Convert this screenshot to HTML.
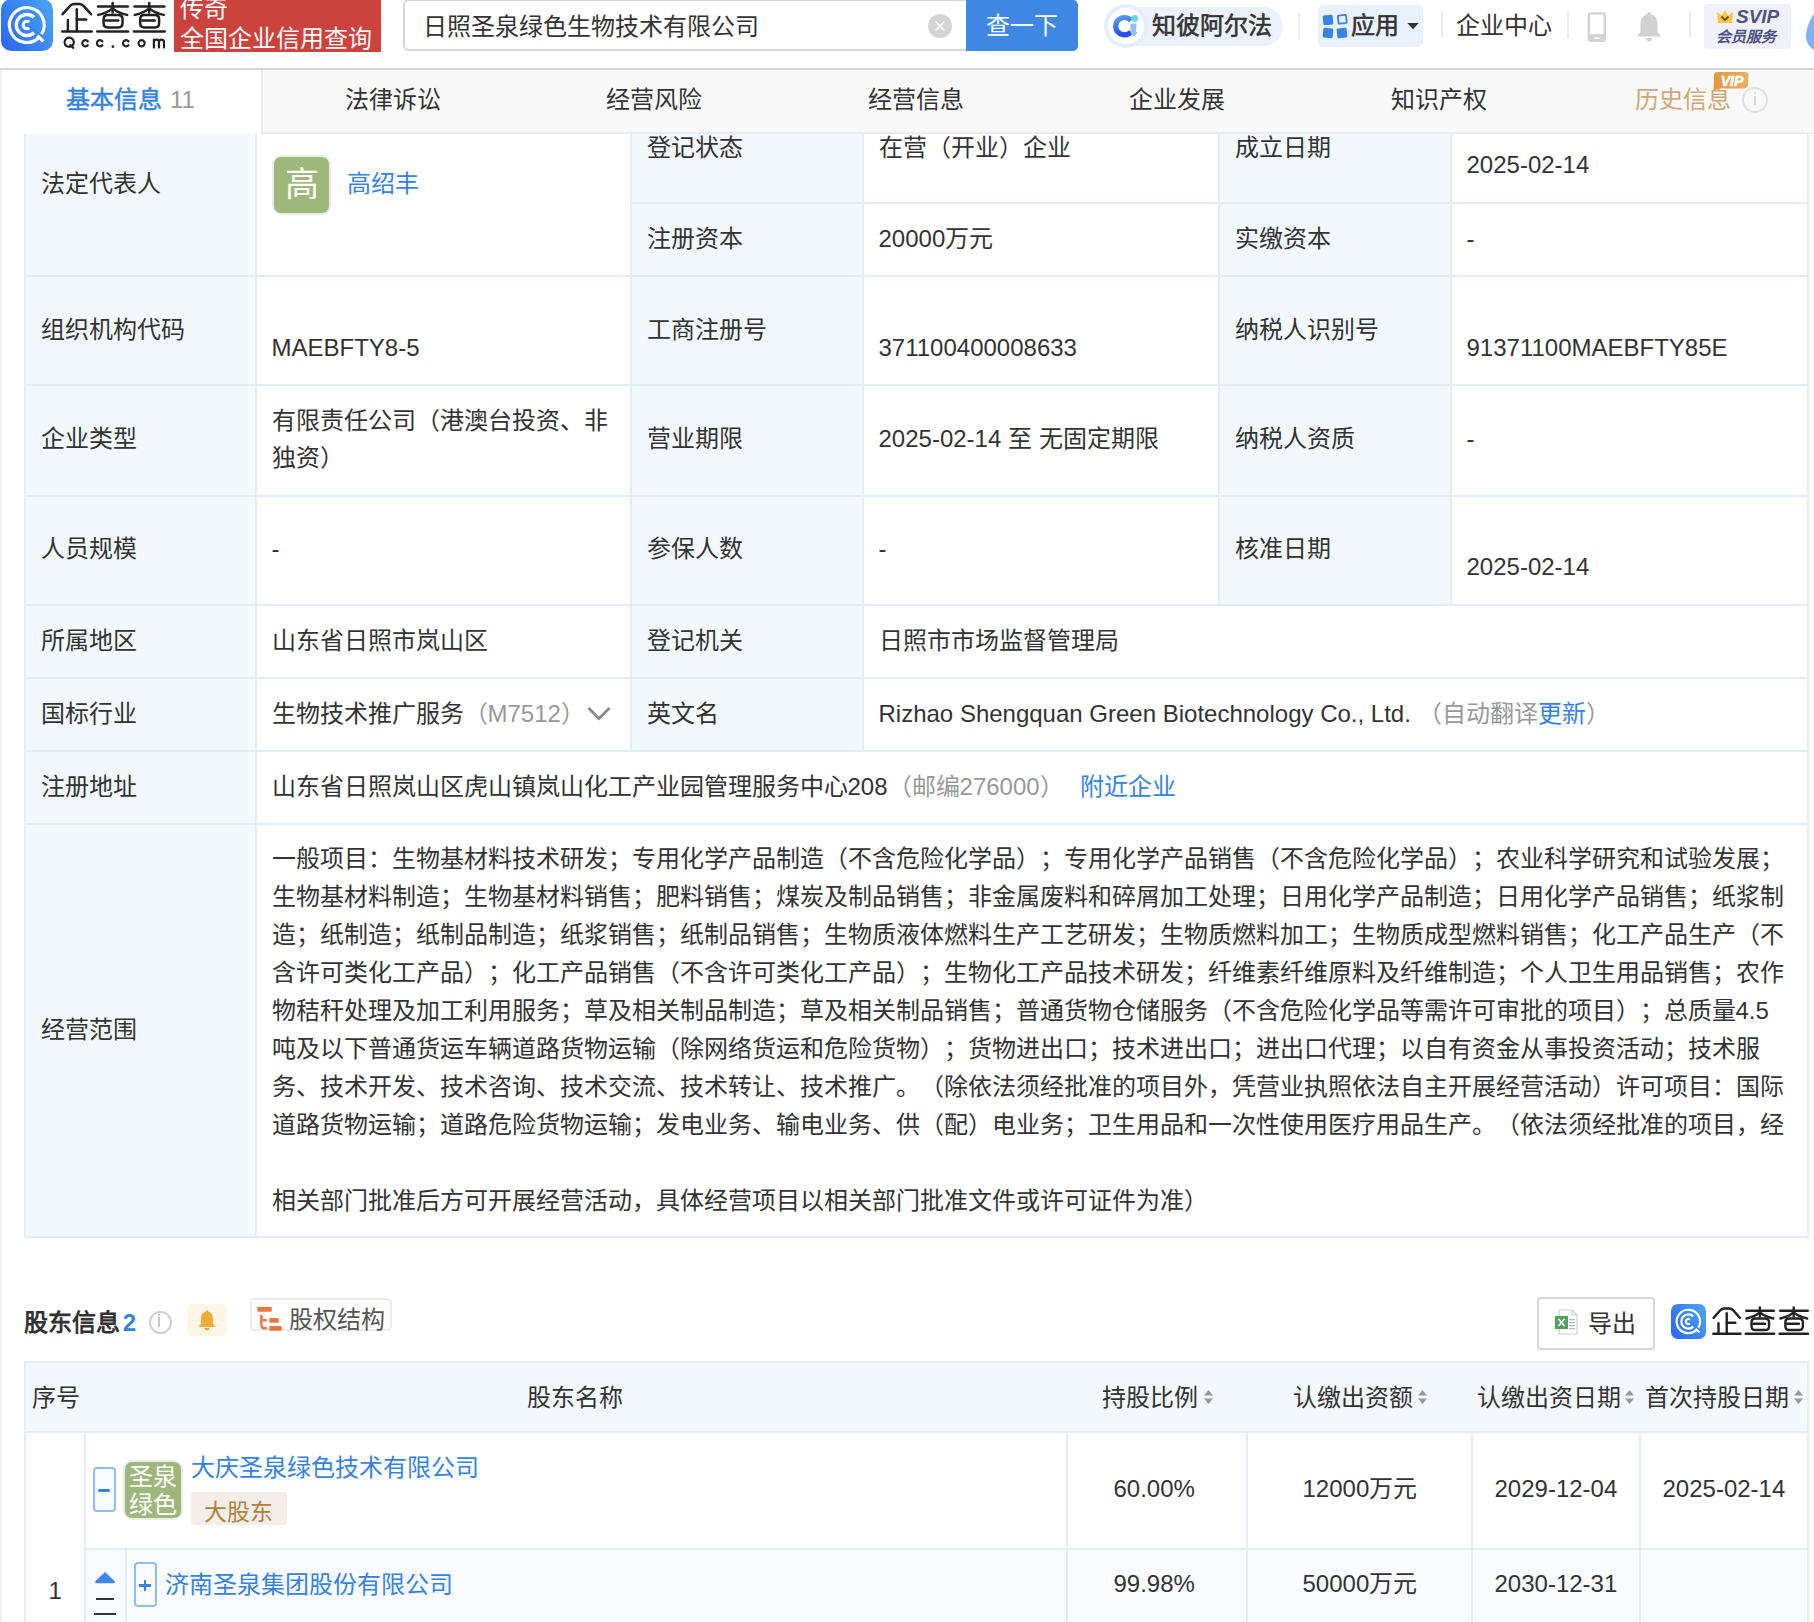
<!DOCTYPE html>
<html lang="zh-CN"><head><meta charset="utf-8"><style>
html,body{margin:0;padding:0;}
body{width:1814px;height:1622px;position:relative;overflow:hidden;background:#fff;font-family:"Liberation Sans",sans-serif;text-spacing-trim:space-all;}
</style></head><body>
<div style="position:absolute;left:26px;top:92px;width:229px;height:1144px;background:#f2f8fc;"></div>
<div style="position:absolute;left:1220px;top:92px;width:230px;height:512px;background:#f2f8fc;"></div>
<div style="position:absolute;left:632px;top:92px;width:230px;height:658px;background:#f2f8fc;"></div>
<div style="position:absolute;left:632px;top:202px;width:1177px;height:2px;background:#e4ecf5;"></div>
<div style="position:absolute;left:24px;top:275px;width:1785px;height:2px;background:#e4ecf5;"></div>
<div style="position:absolute;left:24px;top:384px;width:1785px;height:2px;background:#e4ecf5;"></div>
<div style="position:absolute;left:24px;top:495px;width:1785px;height:2px;background:#e4ecf5;"></div>
<div style="position:absolute;left:24px;top:604px;width:1785px;height:2px;background:#e4ecf5;"></div>
<div style="position:absolute;left:24px;top:677px;width:1785px;height:2px;background:#e4ecf5;"></div>
<div style="position:absolute;left:24px;top:750px;width:1785px;height:2px;background:#e4ecf5;"></div>
<div style="position:absolute;left:24px;top:823px;width:1785px;height:2px;background:#e4ecf5;"></div>
<div style="position:absolute;left:24px;top:1236px;width:1785px;height:2px;background:#e4ecf5;"></div>
<div style="position:absolute;left:24px;top:92px;width:2px;height:1146px;background:#e4ecf5;"></div>
<div style="position:absolute;left:1807px;top:92px;width:2px;height:1146px;background:#e4ecf5;"></div>
<div style="position:absolute;left:255px;top:92px;width:2px;height:1146px;background:#e4ecf5;"></div>
<div style="position:absolute;left:630px;top:92px;width:2px;height:658px;background:#e4ecf5;"></div>
<div style="position:absolute;left:862px;top:92px;width:2px;height:658px;background:#e4ecf5;"></div>
<div style="position:absolute;left:1218px;top:92px;width:2px;height:512px;background:#e4ecf5;"></div>
<div style="position:absolute;left:1450px;top:92px;width:2px;height:512px;background:#e4ecf5;"></div>
<div style="position:absolute;left:41.2px;top:164.0px;line-height:40px;font-size:24px;color:#333;white-space:nowrap;">法定代表人</div>
<div style="position:absolute;left:272px;top:155px;width:55px;height:56px;border:2px solid #ececec;border-radius:9px;background:#9db87a;"></div>
<div style="position:absolute;left:274px;top:157px;width:55px;height:55px;line-height:55px;text-align:center;color:#fff;font-size:34px;">高</div>
<div style="position:absolute;left:347.0px;top:164.0px;line-height:40px;font-size:24px;color:#3483e2;white-space:nowrap;">高绍丰</div>
<div style="position:absolute;left:646.5px;top:128.0px;line-height:40px;font-size:24px;color:#333;white-space:nowrap;">登记状态</div>
<div style="position:absolute;left:878.5px;top:128.0px;line-height:40px;font-size:24px;color:#333;white-space:nowrap;">在营（开业）企业</div>
<div style="position:absolute;left:1234.5px;top:128.0px;line-height:40px;font-size:24px;color:#333;white-space:nowrap;">成立日期</div>
<div style="position:absolute;left:1466.5px;top:145.3px;line-height:40px;font-size:24px;color:#333;white-space:nowrap;">2025-02-14</div>
<div style="position:absolute;left:646.5px;top:219.0px;line-height:40px;font-size:24px;color:#333;white-space:nowrap;">注册资本</div>
<div style="position:absolute;left:878.5px;top:219.0px;line-height:40px;font-size:24px;color:#333;white-space:nowrap;">20000万元</div>
<div style="position:absolute;left:1234.5px;top:219.0px;line-height:40px;font-size:24px;color:#333;white-space:nowrap;">实缴资本</div>
<div style="position:absolute;left:1466.5px;top:219.0px;line-height:40px;font-size:24px;color:#333;white-space:nowrap;">-</div>
<div style="position:absolute;left:41.2px;top:310.0px;line-height:40px;font-size:24px;color:#333;white-space:nowrap;">组织机构代码</div>
<div style="position:absolute;left:271.5px;top:328.0px;line-height:40px;font-size:24px;color:#333;white-space:nowrap;">MAEBFTY8-5</div>
<div style="position:absolute;left:646.5px;top:310.0px;line-height:40px;font-size:24px;color:#333;white-space:nowrap;">工商注册号</div>
<div style="position:absolute;left:878.5px;top:328.0px;line-height:40px;font-size:24px;color:#333;white-space:nowrap;">371100400008633</div>
<div style="position:absolute;left:1234.5px;top:310.0px;line-height:40px;font-size:24px;color:#333;white-space:nowrap;">纳税人识别号</div>
<div style="position:absolute;left:1466.5px;top:328.0px;line-height:40px;font-size:24px;color:#333;white-space:nowrap;">91371100MAEBFTY85E</div>
<div style="position:absolute;left:41.2px;top:419.0px;line-height:40px;font-size:24px;color:#333;white-space:nowrap;">企业类型</div>
<div style="position:absolute;left:271.5px;top:401.0px;line-height:40px;font-size:24px;color:#333;white-space:nowrap;">有限责任公司（港澳台投资、非</div>
<div style="position:absolute;left:271.5px;top:438.0px;line-height:40px;font-size:24px;color:#333;white-space:nowrap;">独资）</div>
<div style="position:absolute;left:646.5px;top:419.0px;line-height:40px;font-size:24px;color:#333;white-space:nowrap;">营业期限</div>
<div style="position:absolute;left:878.5px;top:419.0px;line-height:40px;font-size:24px;color:#333;white-space:nowrap;">2025-02-14 至 无固定期限</div>
<div style="position:absolute;left:1234.5px;top:419.0px;line-height:40px;font-size:24px;color:#333;white-space:nowrap;">纳税人资质</div>
<div style="position:absolute;left:1466.5px;top:419.0px;line-height:40px;font-size:24px;color:#333;white-space:nowrap;">-</div>
<div style="position:absolute;left:41.2px;top:529.0px;line-height:40px;font-size:24px;color:#333;white-space:nowrap;">人员规模</div>
<div style="position:absolute;left:271.5px;top:529.0px;line-height:40px;font-size:24px;color:#333;white-space:nowrap;">-</div>
<div style="position:absolute;left:646.5px;top:529.0px;line-height:40px;font-size:24px;color:#333;white-space:nowrap;">参保人数</div>
<div style="position:absolute;left:878.5px;top:529.0px;line-height:40px;font-size:24px;color:#333;white-space:nowrap;">-</div>
<div style="position:absolute;left:1234.5px;top:529.0px;line-height:40px;font-size:24px;color:#333;white-space:nowrap;">核准日期</div>
<div style="position:absolute;left:1466.5px;top:547.0px;line-height:40px;font-size:24px;color:#333;white-space:nowrap;">2025-02-14</div>
<div style="position:absolute;left:41.2px;top:621.0px;line-height:40px;font-size:24px;color:#333;white-space:nowrap;">所属地区</div>
<div style="position:absolute;left:271.5px;top:621.0px;line-height:40px;font-size:24px;color:#333;white-space:nowrap;">山东省日照市岚山区</div>
<div style="position:absolute;left:646.5px;top:621.0px;line-height:40px;font-size:24px;color:#333;white-space:nowrap;">登记机关</div>
<div style="position:absolute;left:878.5px;top:621.0px;line-height:40px;font-size:24px;color:#333;white-space:nowrap;">日照市市场监督管理局</div>
<div style="position:absolute;left:41.2px;top:694.0px;line-height:40px;font-size:24px;color:#333;white-space:nowrap;">国标行业</div>
<div style="position:absolute;left:271.5px;top:694.0px;line-height:40px;font-size:24px;color:#333;white-space:nowrap;">生物技术推广服务<span style="color:#999">（M7512）</span></div>
<div style="position:absolute;left:646.5px;top:694.0px;line-height:40px;font-size:24px;color:#333;white-space:nowrap;">英文名</div>
<div style="position:absolute;left:878.5px;top:694.0px;line-height:40px;font-size:24px;color:#333;white-space:nowrap;">Rizhao Shengquan Green Biotechnology Co., Ltd. <span style="color:#999">（自动翻译</span><span style="color:#3483e2">更新</span><span style="color:#999">）</span></div>
<svg style="position:absolute;left:586px;top:704px" width="26" height="18" viewBox="0 0 26 18"><path d="M2.5 4 L13 14.5 L23.5 4" fill="none" stroke="#8a8a8a" stroke-width="2.8"/></svg>
<div style="position:absolute;left:41.2px;top:767.0px;line-height:40px;font-size:24px;color:#333;white-space:nowrap;">注册地址</div>
<div style="position:absolute;left:271.5px;top:767.0px;line-height:40px;font-size:24px;color:#333;white-space:nowrap;">山东省日照岚山区虎山镇岚山化工产业园管理服务中心208<span style="color:#999">（邮编276000）</span></div>
<div style="position:absolute;left:1079.5px;top:767.0px;line-height:40px;font-size:24px;color:#3483e2;white-space:nowrap;">附近企业</div>
<div style="position:absolute;left:41.2px;top:1010.0px;line-height:40px;font-size:24px;color:#333;white-space:nowrap;">经营范围</div>
<div style="position:absolute;left:271.5px;top:839.0px;line-height:40px;font-size:24px;color:#333;white-space:nowrap;">一般项目：生物基材料技术研发；专用化学产品制造（不含危险化学品）；专用化学产品销售（不含危险化学品）；农业科学研究和试验发展；</div>
<div style="position:absolute;left:271.5px;top:877.0px;line-height:40px;font-size:24px;color:#333;white-space:nowrap;">生物基材料制造；生物基材料销售；肥料销售；煤炭及制品销售；非金属废料和碎屑加工处理；日用化学产品制造；日用化学产品销售；纸浆制</div>
<div style="position:absolute;left:271.5px;top:915.0px;line-height:40px;font-size:24px;color:#333;white-space:nowrap;">造；纸制造；纸制品制造；纸浆销售；纸制品销售；生物质液体燃料生产工艺研发；生物质燃料加工；生物质成型燃料销售；化工产品生产（不</div>
<div style="position:absolute;left:271.5px;top:953.0px;line-height:40px;font-size:24px;color:#333;white-space:nowrap;">含许可类化工产品）；化工产品销售（不含许可类化工产品）；生物化工产品技术研发；纤维素纤维原料及纤维制造；个人卫生用品销售；农作</div>
<div style="position:absolute;left:271.5px;top:991.0px;line-height:40px;font-size:24px;color:#333;white-space:nowrap;">物秸秆处理及加工利用服务；草及相关制品制造；草及相关制品销售；普通货物仓储服务（不含危险化学品等需许可审批的项目）；总质量4.5</div>
<div style="position:absolute;left:271.5px;top:1029.0px;line-height:40px;font-size:24px;color:#333;white-space:nowrap;">吨及以下普通货运车辆道路货物运输（除网络货运和危险货物）；货物进出口；技术进出口；进出口代理；以自有资金从事投资活动；技术服</div>
<div style="position:absolute;left:271.5px;top:1067.0px;line-height:40px;font-size:24px;color:#333;white-space:nowrap;">务、技术开发、技术咨询、技术交流、技术转让、技术推广。（除依法须经批准的项目外，凭营业执照依法自主开展经营活动）许可项目：国际</div>
<div style="position:absolute;left:271.5px;top:1105.0px;line-height:40px;font-size:24px;color:#333;white-space:nowrap;">道路货物运输；道路危险货物运输；发电业务、输电业务、供（配）电业务；卫生用品和一次性使用医疗用品生产。（依法须经批准的项目，经</div>
<div style="position:absolute;left:271.5px;top:1181.0px;line-height:40px;font-size:24px;color:#333;white-space:nowrap;">相关部门批准后方可开展经营活动，具体经营项目以相关部门批准文件或许可证件为准）</div>
<div style="position:absolute;left:23.8px;top:1302.5px;line-height:40px;font-size:24px;color:#333;white-space:nowrap;font-weight:bold">股东信息<span style="color:#3483e2;margin-left:3px">2</span></div>
<div style="position:absolute;left:149px;top:1311px;width:19px;height:19px;border:2px solid #d0d0d0;border-radius:50%;"></div>
<div style="position:absolute;left:158px;top:1317px;width:2px;height:10px;background:#c8c8c8"></div><div style="position:absolute;left:158px;top:1314px;width:2px;height:2px;background:#c8c8c8"></div>
<div style="position:absolute;left:187px;top:1304px;width:40px;height:32px;background:#fff5e6;border-radius:4px"></div>
<svg style="position:absolute;left:197px;top:1309px" width="20" height="22" viewBox="0 0 20 22"><path d="M10 1 C10 1 11 1 11 2.5 C14.5 3.5 16 6.5 16 10 L16 15 L18.5 18 L1.5 18 L4 15 L4 10 C4 6.5 5.5 3.5 9 2.5 C9 1 10 1 10 1 Z" fill="#f0aa38"/><path d="M7.5 19 L12.5 19 C12.5 20.5 11.5 21.5 10 21.5 C8.5 21.5 7.5 20.5 7.5 19Z" fill="#f0aa38"/></svg>
<div style="position:absolute;left:250px;top:1298px;width:138px;height:29px;border:2px solid #ebebeb;border-radius:5px;"></div>
<svg style="position:absolute;left:256px;top:1305px" width="28" height="28" viewBox="0 0 28 28"><g fill="#ed7740"><rect x="1.4" y="2" width="14.4" height="4.8" rx="1"/><rect x="13.3" y="13" width="9.4" height="4.7" rx="0.8"/><rect x="13.3" y="21" width="12.4" height="4.7" rx="0.8"/></g><g fill="none" stroke="#ed7740" stroke-width="2.5"><path d="M5.4 10 L5.4 20 Q5.4 23.3 8.7 23.3 L10.8 23.3"/><path d="M5.4 15.2 L10.8 15.2"/></g></svg>
<div style="position:absolute;left:288.5px;top:1300.0px;line-height:40px;font-size:24px;color:#555;white-space:nowrap;">股权结构</div>
<div style="position:absolute;left:1537px;top:1297px;width:114px;height:49px;border:2px solid #d6d6d6;border-radius:4px;background:#fff"></div>
<svg style="position:absolute;left:1555px;top:1309px" width="24" height="26" viewBox="0 0 24 26"><path d="M4 1 L17 1 L22 6 L22 25 L4 25 Z" fill="#fff" stroke="#cfcfcf" stroke-width="1.2"/><path d="M17 1 L17 6 L22 6" fill="none" stroke="#cfcfcf" stroke-width="1.2"/><rect x="14" y="10" width="6" height="1.3" fill="#bbb"/><rect x="14" y="13" width="6" height="1.3" fill="#bbb"/><rect x="14" y="16" width="6" height="1.3" fill="#bbb"/><rect x="14" y="19" width="6" height="1.3" fill="#bbb"/><rect x="0" y="7" width="13" height="13" fill="#4ea35c"/><path d="M3.5 10 L9.5 17 M9.5 10 L3.5 17" stroke="#fff" stroke-width="1.8"/></svg>
<div style="position:absolute;left:1587.5px;top:1304.0px;line-height:40px;font-size:24px;color:#333;white-space:nowrap;">导出</div>
<svg style="position:absolute;left:1671px;top:1304px" width="35" height="35" viewBox="0 0 52 52">
 <defs><linearGradient id="lg2" x1="0" y1="0.8" x2="1" y2="0.2"><stop offset="0" stop-color="#2c68f2"/><stop offset="1" stop-color="#4aa2f5"/></linearGradient></defs>
 <rect x="0" y="0" width="52" height="52" rx="10.5" fill="url(#lg2)"/>
 <g fill="none" stroke="#fff" stroke-width="3.2">
 <path d="M40.56 35.22 A17.4 17.4 0 1 0 37.67 38.73"/>
 <path d="M36.41 36.61 L42.20 42.40"/>
 <path d="M32.96 18.32 A10.5 10.5 0 1 0 32.96 33.68" stroke-width="3.3"/>
 <path d="M28.18 23.17 A3.7 3.7 0 1 0 28.18 28.83" stroke-width="3.1"/>
 </g></svg>
<svg style="position:absolute;left:1656px;top:1304px" width="158" height="36" viewBox="0 0 158 36"><g transform="translate(0 0)"><g transform="translate(57.6 4.4) scale(0.925) translate(-62.6 -4)" fill="none" stroke="#222" stroke-width="2.6" stroke-linecap="round" stroke-linejoin="round"><path d="M62.6 14.2 L69.6 6.3 Q71.4 4.1 74.2 4.1 L79.4 4.1 Q82.2 4.1 84 6.3 L91 14.2"/><path d="M76.8 9.3 L76.8 30.6"/><path d="M76.8 19.5 L86.1 19.5"/><path d="M67.9 19.9 L67.9 30.6"/><path d="M62.3 31.4 L91.7 31.4"/><path d="M98 6.6 L127.8 6.6"/><path d="M112.6 3 L112.6 12.5"/><path d="M112.2 8.6 Q107 13 98.2 14.9"/><path d="M113 8.6 Q118.2 13 127.2 14.9"/><path d="M107.8 14.9 L118.3 14.9 Q122.5 14.9 122.5 19.1 L122.5 23.2 Q122.5 27.4 118.3 27.4 L107.8 27.4 Q103.6 27.4 103.6 23.2 L103.6 19.1 Q103.6 14.9 107.8 14.9 Z"/><path d="M105.4 20.6 L118.2 20.6"/><path d="M97.3 31.4 L128.1 31.4"/><path d="M134.6 6.6 L164.4 6.6"/><path d="M149.2 3 L149.2 12.5"/><path d="M148.8 8.6 Q143.6 13 134.8 14.9"/><path d="M149.6 8.6 Q154.8 13 163.8 14.9"/><path d="M144.4 14.9 L154.9 14.9 Q159.1 14.9 159.1 19.1 L159.1 23.2 Q159.1 27.4 154.9 27.4 L144.4 27.4 Q140.2 27.4 140.2 23.2 L140.2 19.1 Q140.2 14.9 144.4 14.9 Z"/><path d="M142.0 20.6 L154.8 20.6"/><path d="M133.9 31.4 L164.7 31.4"/></g></g></svg>
<div style="position:absolute;left:26px;top:1361px;width:1781px;height:70px;background:#f2f8fc;"></div>
<div style="position:absolute;left:86px;top:1550px;width:1721px;height:100px;background:#f9fbfe;"></div>
<div style="position:absolute;left:24px;top:1361px;width:1785px;height:2px;background:#e4ecf5;"></div>
<div style="position:absolute;left:24px;top:1431px;width:1785px;height:2px;background:#e4ecf5;"></div>
<div style="position:absolute;left:85px;top:1548px;width:1724px;height:2px;background:#e4ecf5;"></div>
<div style="position:absolute;left:24px;top:1361px;width:2px;height:261px;background:#e4ecf5;"></div>
<div style="position:absolute;left:1807px;top:1361px;width:2px;height:261px;background:#e4ecf5;"></div>
<div style="position:absolute;left:84px;top:1431px;width:2px;height:191px;background:#e4ecf5;"></div>
<div style="position:absolute;left:1066px;top:1431px;width:2px;height:191px;background:#e4ecf5;"></div>
<div style="position:absolute;left:1246px;top:1431px;width:2px;height:191px;background:#e4ecf5;"></div>
<div style="position:absolute;left:1471px;top:1431px;width:2px;height:191px;background:#e4ecf5;"></div>
<div style="position:absolute;left:1639px;top:1431px;width:2px;height:191px;background:#e4ecf5;"></div>
<div style="position:absolute;left:125px;top:1548px;width:2px;height:74px;background:#e4ecf5;"></div>
<div style="position:absolute;left:31.5px;top:1378.0px;line-height:40px;font-size:24px;color:#333;white-space:nowrap;">序号</div>
<div style="position:absolute;left:526.5px;top:1378.0px;line-height:40px;font-size:24px;color:#333;white-space:nowrap;">股东名称</div>
<div style="position:absolute;left:1101.5px;top:1378.0px;line-height:40px;font-size:24px;color:#333;white-space:nowrap;">持股比例</div>
<svg style="position:absolute;left:1204px;top:1390px" width="9" height="14" viewBox="0 0 9 14"><path d="M4.5 0 L9 5.5 L0 5.5Z M4.5 14 L9 8.5 L0 8.5Z" fill="#999"/></svg>
<div style="position:absolute;left:1292.5px;top:1378.0px;line-height:40px;font-size:24px;color:#333;white-space:nowrap;">认缴出资额</div>
<svg style="position:absolute;left:1418px;top:1390px" width="9" height="14" viewBox="0 0 9 14"><path d="M4.5 0 L9 5.5 L0 5.5Z M4.5 14 L9 8.5 L0 8.5Z" fill="#999"/></svg>
<div style="position:absolute;left:1476.5px;top:1378.0px;line-height:40px;font-size:24px;color:#333;white-space:nowrap;">认缴出资日期</div>
<svg style="position:absolute;left:1625px;top:1390px" width="9" height="14" viewBox="0 0 9 14"><path d="M4.5 0 L9 5.5 L0 5.5Z M4.5 14 L9 8.5 L0 8.5Z" fill="#999"/></svg>
<div style="position:absolute;left:1644.5px;top:1378.0px;line-height:40px;font-size:24px;color:#333;white-space:nowrap;">首次持股日期</div>
<svg style="position:absolute;left:1794px;top:1390px" width="9" height="14" viewBox="0 0 9 14"><path d="M4.5 0 L9 5.5 L0 5.5Z M4.5 14 L9 8.5 L0 8.5Z" fill="#999"/></svg>
<div style="position:absolute;left:48.5px;top:1571.0px;line-height:40px;font-size:24px;color:#333;white-space:nowrap;">1</div>
<div style="position:absolute;left:93px;top:1467px;width:19px;height:41px;border:2px solid #90bdf3;border-radius:4px;background:#f8fbff"></div>
<div style="position:absolute;left:98px;top:1489px;width:12px;height:3px;background:#3483e2;border-radius:1.5px"></div>
<div style="position:absolute;left:123px;top:1460px;width:56px;height:56px;border:2px solid #ececec;border-radius:9px;background:#9db87a;"></div>
<div style="position:absolute;left:125px;top:1462.5px;width:56px;line-height:28px;text-align:center;color:#fff;font-size:24px;">圣泉<br>绿色</div>
<div style="position:absolute;left:191.0px;top:1447.5px;line-height:40px;font-size:24px;color:#3483e2;white-space:nowrap;">大庆圣泉绿色技术有限公司</div>
<div style="position:absolute;left:191px;top:1492px;width:96px;height:33px;background:#f3efe8;border-radius:4px"></div>
<div style="position:absolute;left:203.5px;top:1492.0px;line-height:40px;font-size:23px;color:#b0823f;white-space:nowrap;">大股东</div>
<div style="position:absolute;left:1113.5px;top:1469.0px;line-height:40px;font-size:24px;color:#333;white-space:nowrap;">60.00%</div>
<div style="position:absolute;left:1302.5px;top:1469.0px;line-height:40px;font-size:24px;color:#333;white-space:nowrap;">12000万元</div>
<div style="position:absolute;left:1494.5px;top:1469.0px;line-height:40px;font-size:24px;color:#333;white-space:nowrap;">2029-12-04</div>
<div style="position:absolute;left:1662.5px;top:1469.0px;line-height:40px;font-size:24px;color:#333;white-space:nowrap;">2025-02-14</div>
<svg style="position:absolute;left:94px;top:1571px" width="22" height="13" viewBox="0 0 22 13"><path d="M11 1 L20.5 10 Q21.5 12.3 19 12.3 L3 12.3 Q0.5 12.3 1.5 10 Z" fill="#3e87e6"/></svg>
<div style="position:absolute;left:96px;top:1598px;width:18px;height:2px;background:#333;"></div>
<div style="position:absolute;left:94px;top:1613px;width:22px;height:2px;background:#333;"></div>
<div style="position:absolute;left:134px;top:1562px;width:19px;height:41px;border:2px solid #90bdf3;border-radius:4px;"></div>
<div style="position:absolute;left:139px;top:1584px;width:12px;height:2.5px;background:#3483e2;"></div>
<div style="position:absolute;left:143.8px;top:1579.5px;width:2.3px;height:11.5px;background:#3483e2;"></div>
<div style="position:absolute;left:164.5px;top:1565.0px;line-height:40px;font-size:24px;color:#3483e2;white-space:nowrap;">济南圣泉集团股份有限公司</div>
<div style="position:absolute;left:1113.5px;top:1564.0px;line-height:40px;font-size:24px;color:#333;white-space:nowrap;">99.98%</div>
<div style="position:absolute;left:1302.5px;top:1564.0px;line-height:40px;font-size:24px;color:#333;white-space:nowrap;">50000万元</div>
<div style="position:absolute;left:1494.5px;top:1564.0px;line-height:40px;font-size:24px;color:#333;white-space:nowrap;">2030-12-31</div>
<div style="position:absolute;left:0px;top:70px;width:1.5px;height:1552px;background:#f2f2f2;"></div>

<div style="position:absolute;left:0;top:0;width:1814px;height:68px;background:#fff"></div>
<div style="position:absolute;left:0;top:68px;width:1814px;height:2px;background:#d6d6d6"></div>
<!-- logo icon -->
<svg style="position:absolute;left:1px;top:-1px" width="52" height="52" viewBox="0 0 52 52">
 <defs><linearGradient id="lg1" x1="0" y1="0.8" x2="1" y2="0.2"><stop offset="0" stop-color="#2c68f2"/><stop offset="1" stop-color="#4aa2f5"/></linearGradient></defs>
 <rect x="0" y="0" width="52" height="52" rx="10.5" fill="url(#lg1)"/>
 <g fill="none" stroke="#fff" stroke-width="3.2">
 <path d="M40.56 35.22 A17.4 17.4 0 1 0 37.67 38.73"/>
 <path d="M36.41 36.61 L42.20 42.40"/>
 <path d="M32.96 18.32 A10.5 10.5 0 1 0 32.96 33.68" stroke-width="3.3"/>
 <path d="M28.18 23.17 A3.7 3.7 0 1 0 28.18 28.83" stroke-width="3.1"/>
 </g></svg><svg style="position:absolute;left:0;top:0" width="180" height="56" viewBox="0 0 180 56"><g fill="none" stroke="#222" stroke-width="2.5" stroke-linecap="round" stroke-linejoin="round"><path d="M62.6 14.2 L69.6 6.3 Q71.4 4.1 74.2 4.1 L79.4 4.1 Q82.2 4.1 84 6.3 L91 14.2"/><path d="M76.8 9.3 L76.8 30.6"/><path d="M76.8 19.5 L86.1 19.5"/><path d="M67.9 19.9 L67.9 30.6"/><path d="M62.3 31.4 L91.7 31.4"/><path d="M98 6.6 L127.8 6.6"/><path d="M112.6 3 L112.6 12.5"/><path d="M112.2 8.6 Q107 13 98.2 14.9"/><path d="M113 8.6 Q118.2 13 127.2 14.9"/><path d="M107.8 14.9 L118.3 14.9 Q122.5 14.9 122.5 19.1 L122.5 23.2 Q122.5 27.4 118.3 27.4 L107.8 27.4 Q103.6 27.4 103.6 23.2 L103.6 19.1 Q103.6 14.9 107.8 14.9 Z"/><path d="M105.4 20.6 L118.2 20.6"/><path d="M97.3 31.4 L128.1 31.4"/><path d="M134.6 6.6 L164.4 6.6"/><path d="M149.2 3 L149.2 12.5"/><path d="M148.8 8.6 Q143.6 13 134.8 14.9"/><path d="M149.6 8.6 Q154.8 13 163.8 14.9"/><path d="M144.4 14.9 L154.9 14.9 Q159.1 14.9 159.1 19.1 L159.1 23.2 Q159.1 27.4 154.9 27.4 L144.4 27.4 Q140.2 27.4 140.2 23.2 L140.2 19.1 Q140.2 14.9 144.4 14.9 Z"/><path d="M142.0 20.6 L154.8 20.6"/><path d="M133.9 31.4 L164.7 31.4"/></g><g fill="none" stroke="#222" stroke-width="2.2" stroke-linecap="round"><path d="M69.2 37.6 A4.7 4.7 0 1 1 69.19 37.6 Z"/><path d="M70.2 45.2 L73.3 47.8"/><path d="M87.77 41.31 A3.1 3.1 0 1 0 87.77 45.29"/><path d="M102.37 41.31 A3.1 3.1 0 1 0 102.37 45.29"/><path d="M128.47 41.31 A3.1 3.1 0 1 0 128.47 45.29"/><path d="M141.6 40.2 A3.1 3.1 0 1 1 141.59 40.2 Z"/><path d="M153.9 47.6 L153.9 39.6 M153.9 42 Q153.9 39.6 156.6 39.6 Q159 39.6 159 42 L159 47.6 M159 42 Q159 39.6 161.6 39.6 Q164 39.6 164 42 L164 47.6"/></g><circle cx="112.9" cy="46.6" r="1.4" fill="#222"/></svg>
<div style="position:absolute;left:174px;top:0;width:207px;height:52px;background:#cc423c;overflow:hidden">
 <div style="position:absolute;left:6px;top:-6px;line-height:30px;font-size:24px;color:#fff">传奇<br>全国企业信用查询</div>
</div>
<!-- search -->
<div style="position:absolute;left:403px;top:-1px;width:580px;height:48px;border:2px solid #d8d8d8;border-radius:6px;background:#fff"></div>
<div style="position:absolute;left:423px;top:7px;line-height:40px;font-size:24px;color:#333;white-space:nowrap">日照圣泉绿色生物技术有限公司</div>
<div style="position:absolute;left:928px;top:14px;width:24px;height:24px;border-radius:50%;background:#d4d4d4"></div>
<svg style="position:absolute;left:934px;top:20px" width="12" height="12" viewBox="0 0 12 12"><path d="M1.5 1.5 L10.5 10.5 M10.5 1.5 L1.5 10.5" stroke="#fff" stroke-width="1.6"/></svg>
<div style="position:absolute;left:966px;top:0px;width:112px;height:51px;background:#3f87e2;border-radius:0 5px 5px 0"></div>
<div style="position:absolute;left:986px;top:6px;line-height:40px;font-size:24px;color:#fff;letter-spacing:0px">查一下</div>
<!-- zhibi -->
<div style="position:absolute;left:1104px;top:7px;width:179px;height:39px;border-radius:20px;background:#ebf2fd"></div>
<div style="position:absolute;left:1104px;top:4px;width:44px;height:44px;border-radius:50%;background:#e6eefb"></div>
<div style="position:absolute;left:1108px;top:8px;width:36px;height:36px;border-radius:50%;background:#fff"></div>
<svg style="position:absolute;left:1112px;top:12px" width="30" height="28" viewBox="0 0 30 28">
 <defs><linearGradient id="zg" x1="0" y1="0" x2="0.3" y2="1"><stop offset="0" stop-color="#5a9af2"/><stop offset="1" stop-color="#2350ee"/></linearGradient></defs>
 <path d="M18.9 8.4 A8.7 8.7 0 1 0 18.9 20" fill="none" stroke="url(#zg)" stroke-width="5.2"/>
 <circle cx="22.6" cy="6.4" r="3.4" fill="#62d8f2"/>
 <path d="M18.6 11.4 L24.6 11.4 L24 19.5 L25.4 21 L21.6 25 L18.2 20.2Z" fill="#95c1f3"/>
</svg>
<div style="position:absolute;left:1152px;top:6px;line-height:40px;font-size:24px;color:#333;-webkit-text-stroke:0.6px #333;white-space:nowrap">知彼阿尔法</div>
<div style="position:absolute;left:1298px;top:13px;width:2px;height:27px;background:#ececec"></div>
<div style="position:absolute;left:1318px;top:5px;width:105px;height:42px;border-radius:5px;background:#e9f1fd"></div>
<svg style="position:absolute;left:1322px;top:13px" width="28" height="26" viewBox="0 0 28 26">
 <rect x="1" y="2" width="10" height="10" rx="1.5" fill="#3b82e6" transform="rotate(-6 6 7)"/>
 <rect x="16.2" y="2.2" width="8.2" height="8.2" rx="0.8" fill="none" stroke="#3b82e6" stroke-width="1.8" transform="rotate(-6 20.3 6.3)"/>
 <rect x="1" y="15" width="10" height="10" rx="1.5" fill="#3b82e6" transform="rotate(6 6 20)"/>
 <rect x="15" y="15" width="10" height="10" rx="1.5" fill="#3b82e6" transform="rotate(-6 20 20)"/>
</svg>
<div style="position:absolute;left:1351px;top:6px;line-height:40px;font-size:24px;color:#333;-webkit-text-stroke:0.6px #333">应用</div>
<svg style="position:absolute;left:1407px;top:23px" width="12" height="7" viewBox="0 0 12 7"><path d="M0.3 0 L11.7 0 L6 6.2Z" fill="#333"/></svg>
<div style="position:absolute;left:1441px;top:11px;width:2px;height:27px;background:#ececec"></div>
<div style="position:absolute;left:1456px;top:6px;line-height:40px;font-size:24px;color:#333">企业中心</div>
<div style="position:absolute;left:1567px;top:11px;width:2px;height:27px;background:#ececec"></div>
<svg style="position:absolute;left:1587px;top:12px" width="20" height="31" viewBox="0 0 20 31"><rect x="0.7" y="0.3" width="18.3" height="29.7" rx="3.5" fill="#d2d2d2"/><rect x="3" y="2.6" width="13.6" height="19.6" rx="0.5" fill="#fff"/><rect x="7" y="25.3" width="5.6" height="1.8" rx="0.9" fill="#fff"/></svg>
<svg style="position:absolute;left:1636px;top:11px" width="26" height="32" viewBox="0 0 26 32"><path d="M13 1 C14.5 1 15 2 15 3.5 C19.5 4.5 21.5 8.5 21.5 13 L21.5 21 L25 25.5 L1 25.5 L4.5 21 L4.5 13 C4.5 8.5 6.5 4.5 11 3.5 C11 2 11.5 1 13 1Z" fill="#d2d2d2"/><path d="M10 27 L16 27 C16 29 14.5 30.5 13 30.5 C11.5 30.5 10 29 10 27Z" fill="#d2d2d2"/></svg>
<div style="position:absolute;left:1689px;top:11px;width:2px;height:27px;background:#ececec"></div>
<div style="position:absolute;left:1704px;top:4px;width:87px;height:45px;border-radius:4px;background:#f0f1fa"></div>
<svg style="position:absolute;left:1716px;top:9px" width="18" height="15" viewBox="0 0 18 15"><path d="M1 3 L5.5 6.5 L9 1 L12.5 6.5 L17 3 L16 14 L2 14Z" fill="#f5c84a"/><path d="M5.5 7.5 L9 11 L12.5 7.5" fill="none" stroke="#7a4a10" stroke-width="1.8"/></svg>
<div style="position:absolute;left:1736px;top:6px;line-height:22px;font-size:19px;color:#4e5286;font-weight:bold;font-style:italic">SVIP</div>
<div style="position:absolute;left:1716px;top:26px;line-height:22px;font-size:15px;color:#4e5286;font-weight:bold;font-style:italic;letter-spacing:0px">会员服务</div>
<svg style="position:absolute;left:1804px;top:14px" width="10" height="36" viewBox="0 0 10 36"><path d="M10 0 C6 6 2 14 2 22 C2 28 5 33 10 36Z" fill="#7fb2f5"/></svg>
<!-- nav tabs -->
<div style="position:absolute;left:0;top:70px;width:1814px;height:64px;background:#fff"></div>
<div style="position:absolute;left:263px;top:70px;width:1551px;height:62px;background:#f9f9f9"></div>
<div style="position:absolute;left:261px;top:70px;width:2px;height:64px;background:#ececec"></div>
<div style="position:absolute;left:261px;top:132px;width:1553px;height:2px;background:#ececec"></div>
<div style="position:absolute;left:0;top:70px;width:2px;height:64px;background:#f0f0f0"></div>
<div style="position:absolute;left:66px;top:80px;line-height:40px;font-size:24px;color:#3483e2;-webkit-text-stroke:0.5px #3483e2">基本信息<span style="color:#999;margin-left:8px;-webkit-text-stroke:0">11</span></div>
<div style="position:absolute;left:345px;top:80px;line-height:40px;font-size:24px;color:#333">法律诉讼</div>
<div style="position:absolute;left:606px;top:80px;line-height:40px;font-size:24px;color:#333">经营风险</div>
<div style="position:absolute;left:868px;top:80px;line-height:40px;font-size:24px;color:#333">经营信息</div>
<div style="position:absolute;left:1129px;top:80px;line-height:40px;font-size:24px;color:#333">企业发展</div>
<div style="position:absolute;left:1391px;top:80px;line-height:40px;font-size:24px;color:#333">知识产权</div>
<div style="position:absolute;left:1635px;top:80px;line-height:40px;font-size:24px;color:#d0a877">历史信息</div>
<div style="position:absolute;left:1742px;top:87px;width:22px;height:22px;border:2px solid #e0e0e0;border-radius:50%"></div>
<div style="position:absolute;left:1754px;top:96px;width:2px;height:9px;background:#d8d8d8"></div><div style="position:absolute;left:1754px;top:92px;width:2px;height:2px;background:#d8d8d8"></div>
<svg style="position:absolute;left:1713px;top:72px" width="37" height="20" viewBox="0 0 37 20"><defs><linearGradient id="vg" x1="0" y1="0" x2="1" y2="0"><stop offset="0" stop-color="#e29a3c"/><stop offset="1" stop-color="#e9b163"/></linearGradient></defs><path d="M4 0 L32 0 Q36 0 35.5 4 L35 12.5 Q34.6 16.5 30.5 16.5 L5 16.5 L0.5 19.5 L1 4 Q1.2 0 4 0Z" fill="url(#vg)"/><text x="19" y="13.6" font-size="14" font-weight="bold" font-style="italic" fill="#fff" text-anchor="middle" font-family="Liberation Sans" stroke="#fff" stroke-width="0.6">VIP</text></svg>

</body></html>
